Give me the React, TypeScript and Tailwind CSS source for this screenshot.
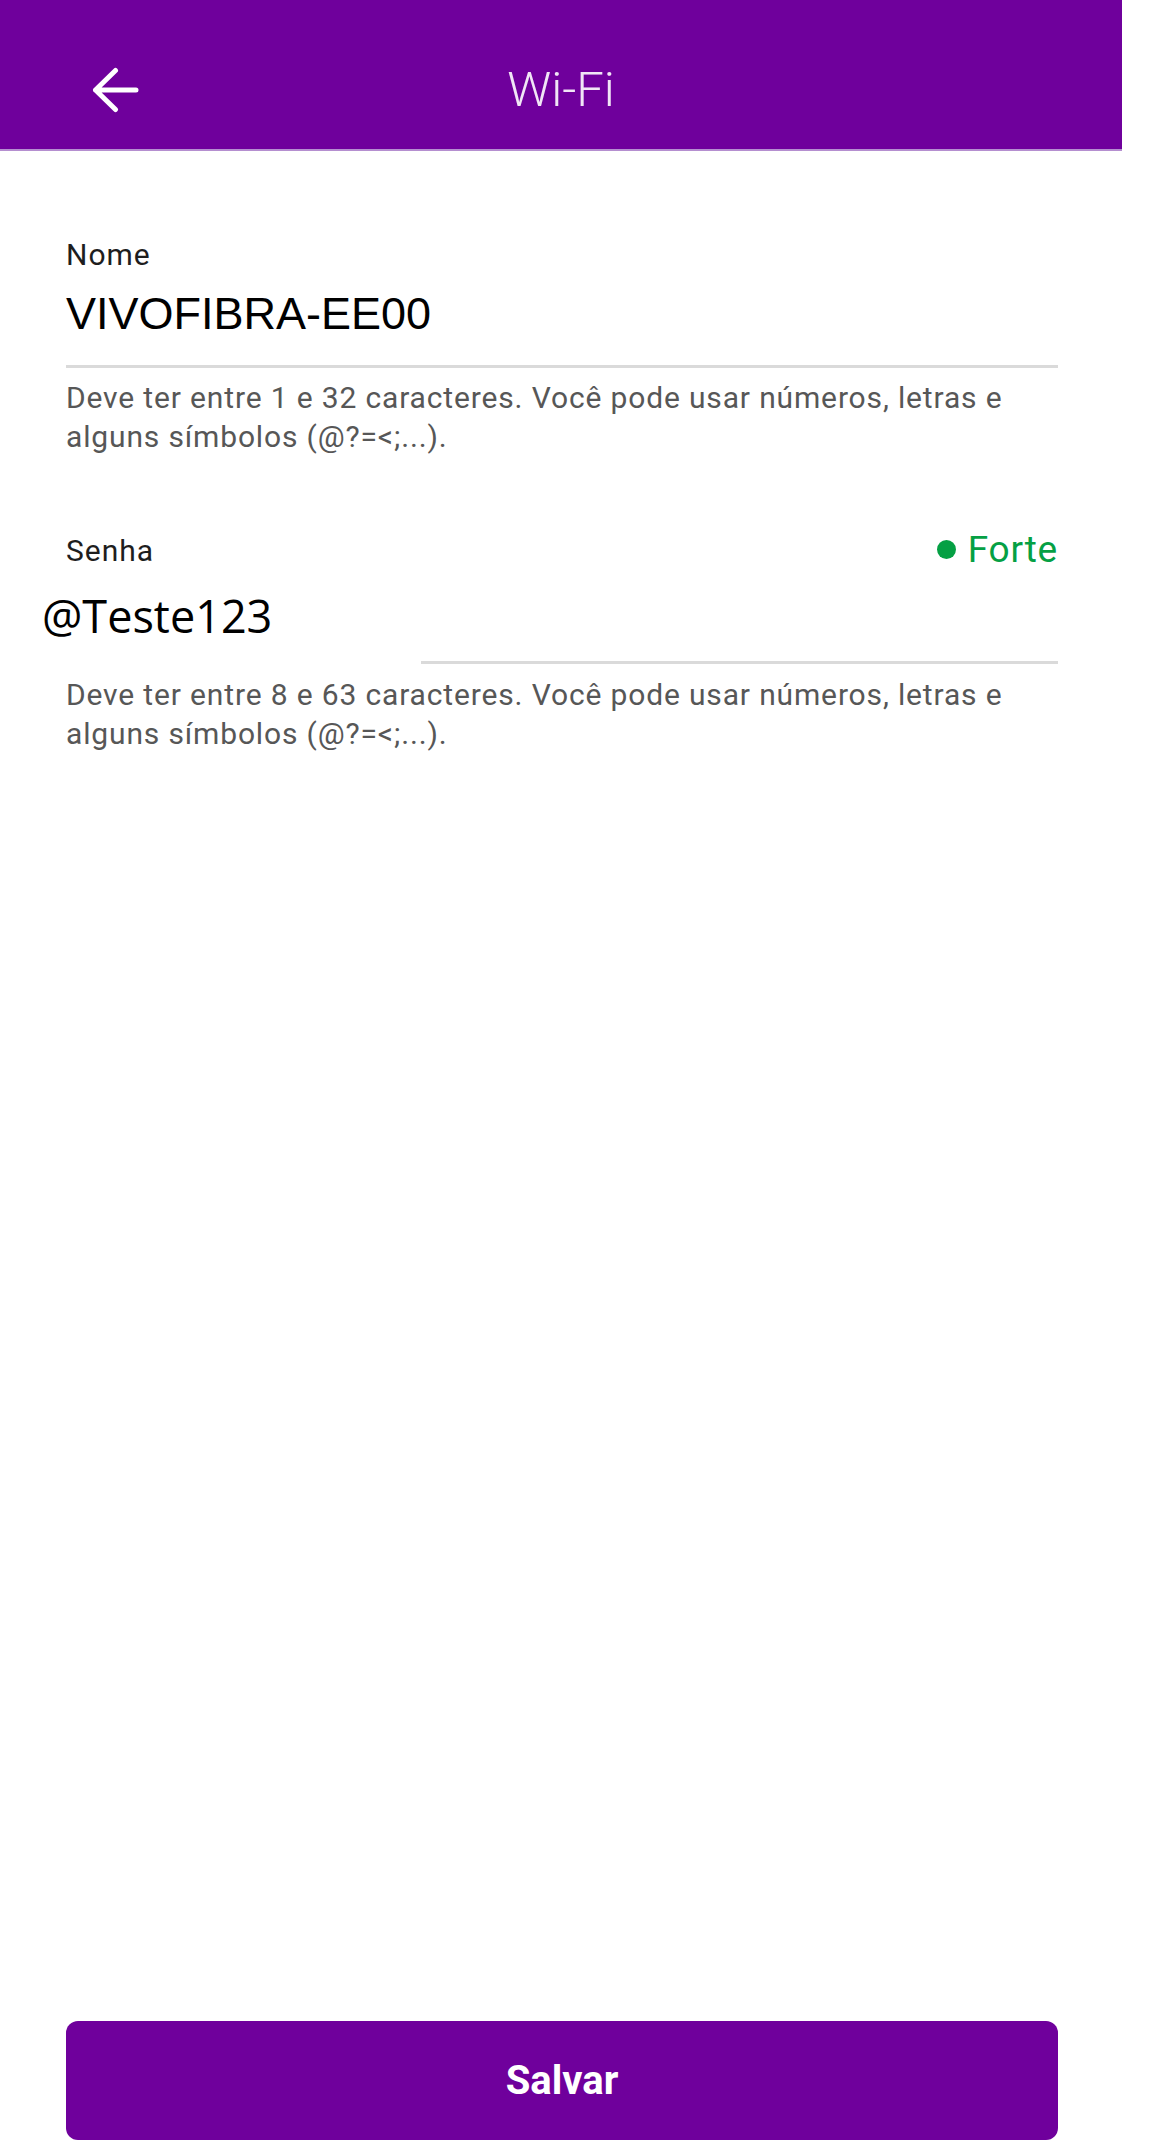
import React from "react";

export default function App() {
  const roboto = { fontFamily: "Roboto, 'Noto Sans', sans-serif" } as React.CSSProperties;
  return (
    <div className="w-[1150px] min-h-[2149px] bg-white flex" style={roboto}>
      <div className="w-[1122px] min-h-[2149px] flex flex-col">
        {/* Header */}
        <header className="h-[151px] bg-[#6f009c] border-b-2 border-[#b58fd0] flex flex-col">
          <div className="mt-[60px] h-[60px] flex items-center">
            <div className="w-[139px] pl-[91px] flex items-center">
              <svg width="48" height="46" viewBox="0 0 48 46" fill="none">
                <path
                  d="M45 23H4.5M24.5 3.5L4.5 23l20 19.5"
                  stroke="#ffffff"
                  strokeWidth="5"
                  strokeLinecap="round"
                  strokeLinejoin="round"
                />
              </svg>
            </div>
            <div className="flex-1 text-center text-[49px] leading-[60px] font-light text-[#f1e6f6]">
              Wi-Fi
            </div>
            <div className="w-[139px]" />
          </div>
        </header>

        {/* Content */}
        <main className="flex flex-col pl-[66px] pr-[64px]">
          <div className="mt-[86px] text-[30px] leading-[36px] tracking-[1px] text-[#1e1e1e]">Nome</div>
          <div
            className="mt-[15px] text-[45px] leading-[52px] text-black"
            style={{ fontFamily: "'Liberation Sans', Arial, sans-serif" }}
          >
            VIVOFIBRA-EE00
          </div>
          <div className="mt-[25px] h-[3px] bg-[#dadada]" />
          <p className="mt-[10px] text-[30px] leading-[39px] tracking-[0.85px] text-[#575757] whitespace-nowrap">
            Deve ter entre 1 e 32 caracteres. Você pode usar números, letras e
            <br />
            alguns símbolos (@?=&lt;;...).
          </p>

          <div className="mt-[77px] flex items-baseline justify-between">
            <span className="text-[30px] leading-[36px] tracking-[1px] text-[#1e1e1e]">Senha</span>
            <span className="flex items-center gap-[12px] text-[37px] leading-[36px] tracking-[0.8px] text-[#05a044] -translate-y-[2px]">
              <span className="w-[19px] h-[19px] rounded-full bg-[#05a044]" />
              Forte
            </span>
          </div>
          <div
            className="mt-[21px] ml-[-24px] text-[45px] leading-[50px] text-black"
            style={{ fontFamily: "'Open Sans', 'Noto Sans', sans-serif" }}
          >
            @Teste123
          </div>
          <div className="mt-[20px] ml-[355px] h-[3px] bg-[#dadada]" />
          <p className="mt-[11px] text-[30px] leading-[39px] tracking-[0.85px] text-[#575757] whitespace-nowrap">
            Deve ter entre 8 e 63 caracteres. Você pode usar números, letras e
            <br />
            alguns símbolos (@?=&lt;;...).
          </p>
        </main>

        <div className="mt-auto px-[64px] pl-[66px] pb-[9px]">
          <button className="w-full h-[119px] rounded-[12px] bg-[#6f009c] text-white text-[40px] font-bold">
            Salvar
          </button>
        </div>
      </div>
    </div>
  );
}
